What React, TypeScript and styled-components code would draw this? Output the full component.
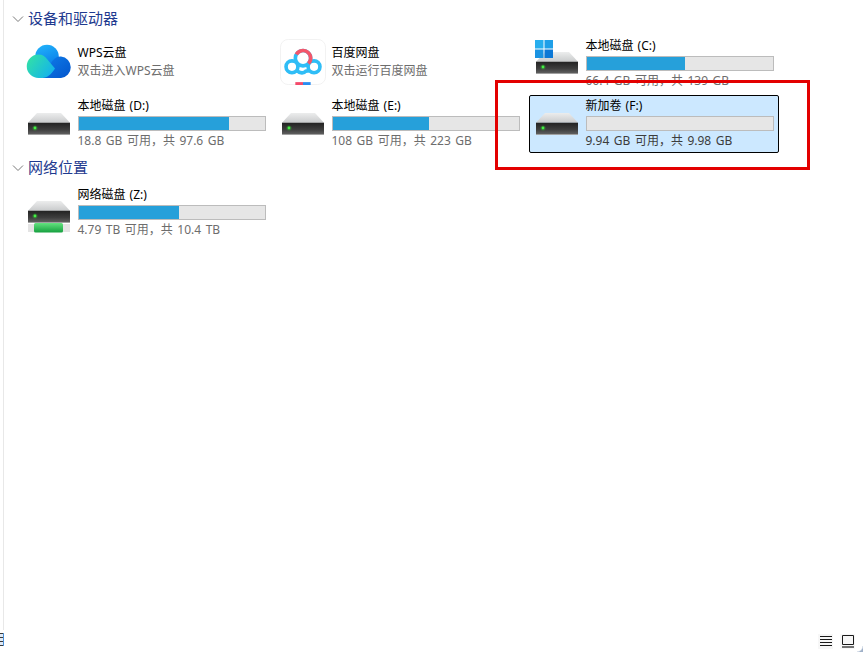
import React from "react";
import styled, { createGlobalStyle } from "styled-components";

type DriveT = {
  id: string;
  name: string;
  free: string;
  percent: number;
  badge?: "windows" | "network";
  selected?: boolean;
};

const GlobalStyle = createGlobalStyle`
  html, body {
    margin: 0;
    padding: 0;
    background: #fff;
    overflow: hidden;
  }
  body {
    font-family: "Noto Sans", "Noto Sans CJK SC", sans-serif;
  }
`;

const DriveIcon: React.FC<{ badge?: DriveT["badge"] }> = ({ badge }) => (
  <svg width="46" height="46" viewBox="0 0 46 46">
    <defs>
      <linearGradient id="driveTop" x1="0" y1="0" x2="0" y2="1">
        <stop offset="0" stopColor="#eceded" />
        <stop offset="1" stopColor="#c9cbcc" />
      </linearGradient>
      <linearGradient id="driveFront" x1="0" y1="0" x2="0" y2="1">
        <stop offset="0" stopColor="#222" />
        <stop offset="0.55" stopColor="#3d3d3d" />
        <stop offset="1" stopColor="#666" />
      </linearGradient>
      <linearGradient id="tube" x1="0" y1="0" x2="0" y2="1">
        <stop offset="0" stopColor="#63e27f" />
        <stop offset="1" stopColor="#16a03f" />
      </linearGradient>
    </defs>
    <g transform={badge ? "translate(0,-1)" : undefined}>
      <path d="M11 12 H35 L44 21.7 H2 Z" fill="url(#driveTop)" />
      <rect x="2" y="21.7" width="42" height="12.3" fill="url(#driveFront)" />
      <rect x="2" y="33" width="42" height="1" fill="#a0a0a0" />
      <circle cx="9" cy="27" r="2.6" fill="#2fd62f" opacity="0.3" />
      <circle cx="9" cy="27" r="1.4" fill="#43f043" />
      {badge === "network" && (
        <g>
          <rect x="2" y="35" width="42" height="8" fill="#e4e4e4" />
          <rect x="8" y="34" width="29" height="9.5" rx="1.5" fill="url(#tube)" />
        </g>
      )}
    </g>
  </svg>
);

const WindowsBadge = () => (
  <svg width="18" height="18" viewBox="0 0 18 18">
    <rect x="0" y="0" width="8.5" height="8.5" fill="#27aeee" />
    <rect x="9.5" y="0" width="8.5" height="8.5" fill="#1f9fe8" />
    <rect x="0" y="9.5" width="8.5" height="8.5" fill="#1a93e2" />
    <rect x="9.5" y="9.5" width="8.5" height="8.5" fill="#0c78d6" />
  </svg>
);

const WpsIcon = () => (
  <svg width="46" height="36" viewBox="0 0 46 36">
    <defs>
      <linearGradient id="wpsBack" x1="0" y1="0" x2="0.4" y2="1">
        <stop offset="0" stopColor="#23b6fb" />
        <stop offset="1" stopColor="#0a7eea" />
      </linearGradient>
      <linearGradient id="wpsRight" x1="0" y1="0" x2="1" y2="1">
        <stop offset="0" stopColor="#0f7eea" />
        <stop offset="1" stopColor="#0355cc" />
      </linearGradient>
      <linearGradient id="wpsLeft" x1="0" y1="0" x2="1" y2="0.6">
        <stop offset="0" stopColor="#35e5a0" />
        <stop offset="1" stopColor="#14b4ea" />
      </linearGradient>
    </defs>
    <circle cx="21" cy="12.5" r="11.8" fill="url(#wpsBack)" />
    <path d="M35 34 H16 L24 21 Q28 12 35 12.5 A10.8 10.8 0 0 1 35 34 Z" fill="url(#wpsRight)" />
    <path
      d="M12.5 10.5 C16.5 10.5 19 12.5 21 15 L29 24.5 C25.5 30 21.5 34 16 34 H12.5 A11.75 11.75 0 0 1 12.5 10.5 Z"
      fill="url(#wpsLeft)"
    />
  </svg>
);

const BaiduIcon = () => (
  <svg width="48" height="48" viewBox="0 0 48 48">
    <rect x="0.5" y="0.5" width="47" height="47" rx="8" fill="#fff" stroke="#f1f1f1" />
    <circle cx="12.5" cy="29" r="6.2" fill="none" stroke="#2fbdf6" strokeWidth="3.8" />
    <circle cx="35.5" cy="29" r="6.2" fill="none" stroke="#2fbdf6" strokeWidth="3.8" />
    <path d="M17.5 33 C21 36 25 36 27 33.5 L30.5 33" fill="none" stroke="#2fbdf6" strokeWidth="3.8" />
    <circle cx="24" cy="20" r="8" fill="none" stroke="#2fbdf6" strokeWidth="3.8" />
    <path d="M17.07 16 A8 8 0 1 1 29.66 25.66" fill="none" stroke="#f4566a" strokeWidth="3.8" />
    <rect x="16" y="45" width="8" height="3" fill="#f4496a" />
    <rect x="24" y="45" width="8" height="3" fill="#2a8cf0" />
  </svg>
);

const DetailsIcon = () => (
  <svg width="14" height="14" viewBox="0 0 14 14">
    <path d="M1 2.5 H13 M1 5.5 H13 M1 8.5 H13 M1 11.5 H13" stroke="#1a1a1a" strokeWidth="1" fill="none" />
  </svg>
);

const TilesIcon = () => (
  <svg width="14" height="14" viewBox="0 0 14 14">
    <path d="M1.5 1.5 H12.5 V10.5 H1.5 Z" stroke="#1a1a1a" strokeWidth="1" fill="none" />
    <path d="M1 13 H13" stroke="#1a1a1a" strokeWidth="1.2" fill="none" />
  </svg>
);

const Chevron = () => (
  <svg width="12" height="8" viewBox="0 0 12 8">
    <path d="M1 1.5 L6 6.5 L11 1.5" stroke="#7a7a7a" strokeWidth="1" fill="none" />
  </svg>
);

const SectionHeader: React.FC<{ title: string }> = ({ title }) => (
  <Header>
    <Chevron />
    <HeaderTitle>{title}</HeaderTitle>
  </Header>
);

const DriveTile: React.FC<{ drive: DriveT }> = ({ drive }) => (
  <Tile $selected={drive.selected}>
    <IconBox>
      <DriveIcon badge={drive.badge} />
      {drive.badge === "windows" && (
        <Badge>
          <WindowsBadge />
        </Badge>
      )}
    </IconBox>
    <Info>
      <Name>{drive.name}</Name>
      <Bar>
        <BarFill style={{ width: `${drive.percent}%` }} />
      </Bar>
      <Sub $dark={drive.selected}>{drive.free}</Sub>
    </Info>
  </Tile>
);

const AppTile: React.FC<{ name: string; sub: string; icon: React.ReactNode }> = ({ name, sub, icon }) => (
  <Tile>
    <IconBox $raised>{icon}</IconBox>
    <AppInfo>
      <Name>{name}</Name>
      <AppSub>{sub}</AppSub>
    </AppInfo>
  </Tile>
);

export default function App() {
  return (
    <Page>
      <GlobalStyle />
      <Content>
        <Section>
          <SectionHeader title="设备和驱动器" />
          <Grid>
            <AppTile name="WPS云盘" sub="双击进入WPS云盘" icon={<WpsIcon />} />
            <AppTile name="百度网盘" sub="双击运行百度网盘" icon={<BaiduIcon />} />
            <DriveTile
              drive={{ id: "c", name: "本地磁盘 (C:)", free: "66.4 GB 可用，共 139 GB", percent: 53, badge: "windows" }}
            />
            <DriveTile drive={{ id: "d", name: "本地磁盘 (D:)", free: "18.8 GB 可用，共 97.6 GB", percent: 81 }} />
            <DriveTile drive={{ id: "e", name: "本地磁盘 (E:)", free: "108 GB 可用，共 223 GB", percent: 52 }} />
            <DriveTile
              drive={{ id: "f", name: "新加卷 (F:)", free: "9.94 GB 可用，共 9.98 GB", percent: 0, selected: true }}
            />
          </Grid>
        </Section>
        <Section>
          <SectionHeader title="网络位置" />
          <Grid>
            <DriveTile
              drive={{ id: "z", name: "网络磁盘 (Z:)", free: "4.79 TB 可用，共 10.4 TB", percent: 54, badge: "network" }}
            />
          </Grid>
        </Section>
      </Content>
      <StatusBar>
        <StatusEdge />
        <ViewButtons>
          <ViewButton>
            <DetailsIcon />
          </ViewButton>
          <ViewButton>
            <TilesIcon />
          </ViewButton>
        </ViewButtons>
      </StatusBar>
      <Highlight />
      <Corner />
    </Page>
  );
}

const Page = styled.div`
  position: relative;
  display: flex;
  flex-direction: column;
  width: 863px;
  height: 652px;
  overflow: hidden;
  background: #fff;
`;

const Content = styled.div`
  flex: 1;
  display: flex;
  flex-direction: column;
  gap: 5px;
  margin-left: 3px;
  padding: 9px 0 0 8px;
  border-left: 1px solid #e8e8e8;
`;

const Section = styled.section`
  display: flex;
  flex-direction: column;
  gap: 7px;
`;

const Header = styled.div`
  display: flex;
  align-items: center;
  gap: 4px;
  height: 19px;
`;

const HeaderTitle = styled.h2`
  margin: 0;
  font-size: 15px;
  font-weight: 400;
  line-height: 19px;
  color: #1e3a8f;
`;

const Grid = styled.div`
  display: grid;
  grid-template-columns: repeat(3, 250px);
  grid-auto-rows: 58px;
  column-gap: 4px;
  row-gap: 2px;
  margin-left: 9px;
`;

const Tile = styled.div<{ $selected?: boolean }>`
  display: flex;
  align-items: center;
  box-sizing: border-box;
  height: 58px;
  padding: 0 4px 0 5px;
  border: 1px solid ${(p) => (p.$selected ? "#000" : "transparent")};
  border-radius: 2px;
  background: ${(p) => (p.$selected ? "#cce8ff" : "transparent")};
`;

const IconBox = styled.div<{ $raised?: boolean }>`
  position: relative;
  flex: none;
  display: flex;
  align-items: center;
  justify-content: center;
  width: 46px;
  height: 48px;
  margin: 0 5.5px ${(p) => (p.$raised ? "4px" : "0")} -1px;
`;

const Badge = styled.div`
  position: absolute;
  left: 1px;
  top: 0;
  line-height: 0;
`;

const Info = styled.div`
  display: flex;
  flex-direction: column;
  align-self: flex-start;
  padding-top: 1px;
  min-width: 0;
  flex: 1;
`;

const AppInfo = styled(Info)`
  padding-top: 8px;
`;

const Name = styled.div`
  font-size: 12px;
  line-height: 17px;
  word-spacing: 1px;
  color: #000;
  white-space: nowrap;
`;

const Bar = styled.div`
  box-sizing: border-box;
  width: 188px;
  height: 15px;
  margin-top: 2px;
  border: 1px solid #bcbcbc;
  background: #e6e6e6;
`;

const BarFill = styled.div`
  height: 100%;
  background: #26a0da;
`;

const Sub = styled.div<{ $dark?: boolean }>`
  font-size: 12px;
  line-height: 17px;
  margin-top: 1px;
  word-spacing: 1.4px;
  color: ${(p) => (p.$dark ? "#3c3c3c" : "#6d6d6d")};
  white-space: nowrap;
`;

const AppSub = styled.div`
  font-size: 12px;
  line-height: 17px;
  margin-top: 1px;
  color: #6d6d6d;
  white-space: nowrap;
`;

const StatusBar = styled.div`
  display: flex;
  align-items: center;
  justify-content: space-between;
  height: 22px;
  padding: 0 8px 0 0;
`;

const StatusEdge = styled.div`
  width: 3px;
  height: 13px;
  margin-bottom: 4px;
  background: repeating-linear-gradient(#3a3a3a 0 1px, #dfe9f5 1px 4px);
  border-right: 1px solid #4a90d9;
`;

const ViewButtons = styled.div`
  display: flex;
  gap: 7px;
`;

const ViewButton = styled.div`
  display: flex;
  align-items: center;
  justify-content: center;
  width: 15px;
  height: 15px;
  background: #f7f7f7;
`;

const Highlight = styled.div`
  position: absolute;
  left: 495px;
  top: 80px;
  box-sizing: border-box;
  width: 315px;
  height: 90px;
  border: 3px solid #e30000;
  pointer-events: none;
`;

const Corner = styled.div`
  position: absolute;
  right: 0;
  bottom: 0;
  width: 6px;
  height: 6px;
  background: radial-gradient(circle at 0 0, #fff 5px, #9fb0c8 6.5px);
`;
